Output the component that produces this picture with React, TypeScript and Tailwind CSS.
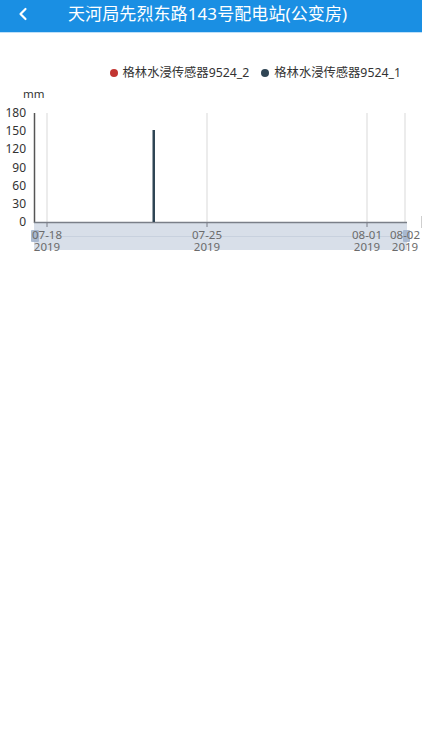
import * as React from 'react'
import { ChevronLeft } from 'lucide-react'

const font = '"Noto Sans", "Noto Sans CJK SC", sans-serif'

// y positions for the value axis (page coords minus chart top)
const top = 85
const yTicks = [180, 150, 120, 90, 60, 30, 0]
const yOf = (v: number) => 222 - top - (v / 180) * 109

export default function App() {
  return (
    <div className="w-[422px] h-[750px] bg-white overflow-hidden" style={{ fontFamily: font }}>
      <div className="h-[33px] bg-[#1a8fe3] border-b border-[#bfe0f8] flex items-center pb-[5px]">
        <ChevronLeft className="ml-[13px] text-white" size={20} strokeWidth={2.6} />
        <div className="ml-[35px] text-white text-[17px] leading-none tracking-[0.1px]">
          天河局先烈东路143号配电站(公变房)
        </div>
      </div>

      <div className="mt-[32px] h-[16px] flex items-center justify-end pr-[21px] text-[12.3px] text-[#333]">
        <span className="w-[8px] h-[8px] rounded-full bg-[#c23531]" />
        <span className="ml-[5px]">格林水浸传感器9524_2</span>
        <span className="ml-[12px] w-[8px] h-[8px] rounded-full bg-[#2f4554]" />
        <span className="ml-[5px]">格林水浸传感器9524_1</span>
      </div>

      <svg width="422" height="175" className="block mt-[4px]" style={{ fontFamily: font }}>
        <text x="23" y={98 - top} fontSize="11.5" fill="#333">mm</text>

        {yTicks.map((v) => (
          <text key={v} x="26" y={yOf(v) + 4} fontSize="12" fill="#333" textAnchor="end">
            {v}
          </text>
        ))}

        {[47, 207, 367, 405].map((x) => (
          <line key={x} x1={x} x2={x} y1={113 - top} y2={222 - top} stroke="#d9d9d9" strokeWidth="1" />
        ))}

        {/* data zoom slider */}
        <rect x="34" y={223 - top} width="373" height="27" fill="#d8dfe9" />
        <line x1="34" x2="407" y1={236.5 - top} y2={236.5 - top} stroke="#c8d1de" strokeWidth="1" />
        <rect x="31" y={230 - top} width="8" height="12" rx="1" fill="#a3b4cc" opacity="0.9" />
        <rect x="403" y={230 - top} width="7" height="12" rx="1" fill="#a3b4cc" opacity="0.9" />
        <line x1="421.5" x2="421.5" y1={216 - top} y2={228 - top} stroke="#cfcfcf" />

        {/* axes */}
        <line x1="34.5" x2="34.5" y1={113 - top} y2={223 - top} stroke="#555" strokeWidth="1.5" />
        <line x1="34" x2="407" y1={222.5 - top} y2={222.5 - top} stroke="#7a7f88" strokeWidth="1.5" />
        {[47, 207, 367].map((x) => (
          <line key={x} x1={x} x2={x} y1={222 - top} y2={227 - top} stroke="#7a7f88" strokeWidth="1" />
        ))}

        {/* spike */}
        <rect x="152.5" y={130 - top} width="2.5" height="92" fill="#2f4554" />

        {[
          [47, '07-18'],
          [207, '07-25'],
          [367, '08-01'],
          [405, '08-02'],
        ].map(([x, d]) => (
          <g key={d as string} fontSize="11.5" fill="#6b6b6b" textAnchor="middle">
            <text x={x as number} y={239 - top}>{d}</text>
            <text x={x as number} y={250.5 - top}>2019</text>
          </g>
        ))}
      </svg>
    </div>
  )
}
